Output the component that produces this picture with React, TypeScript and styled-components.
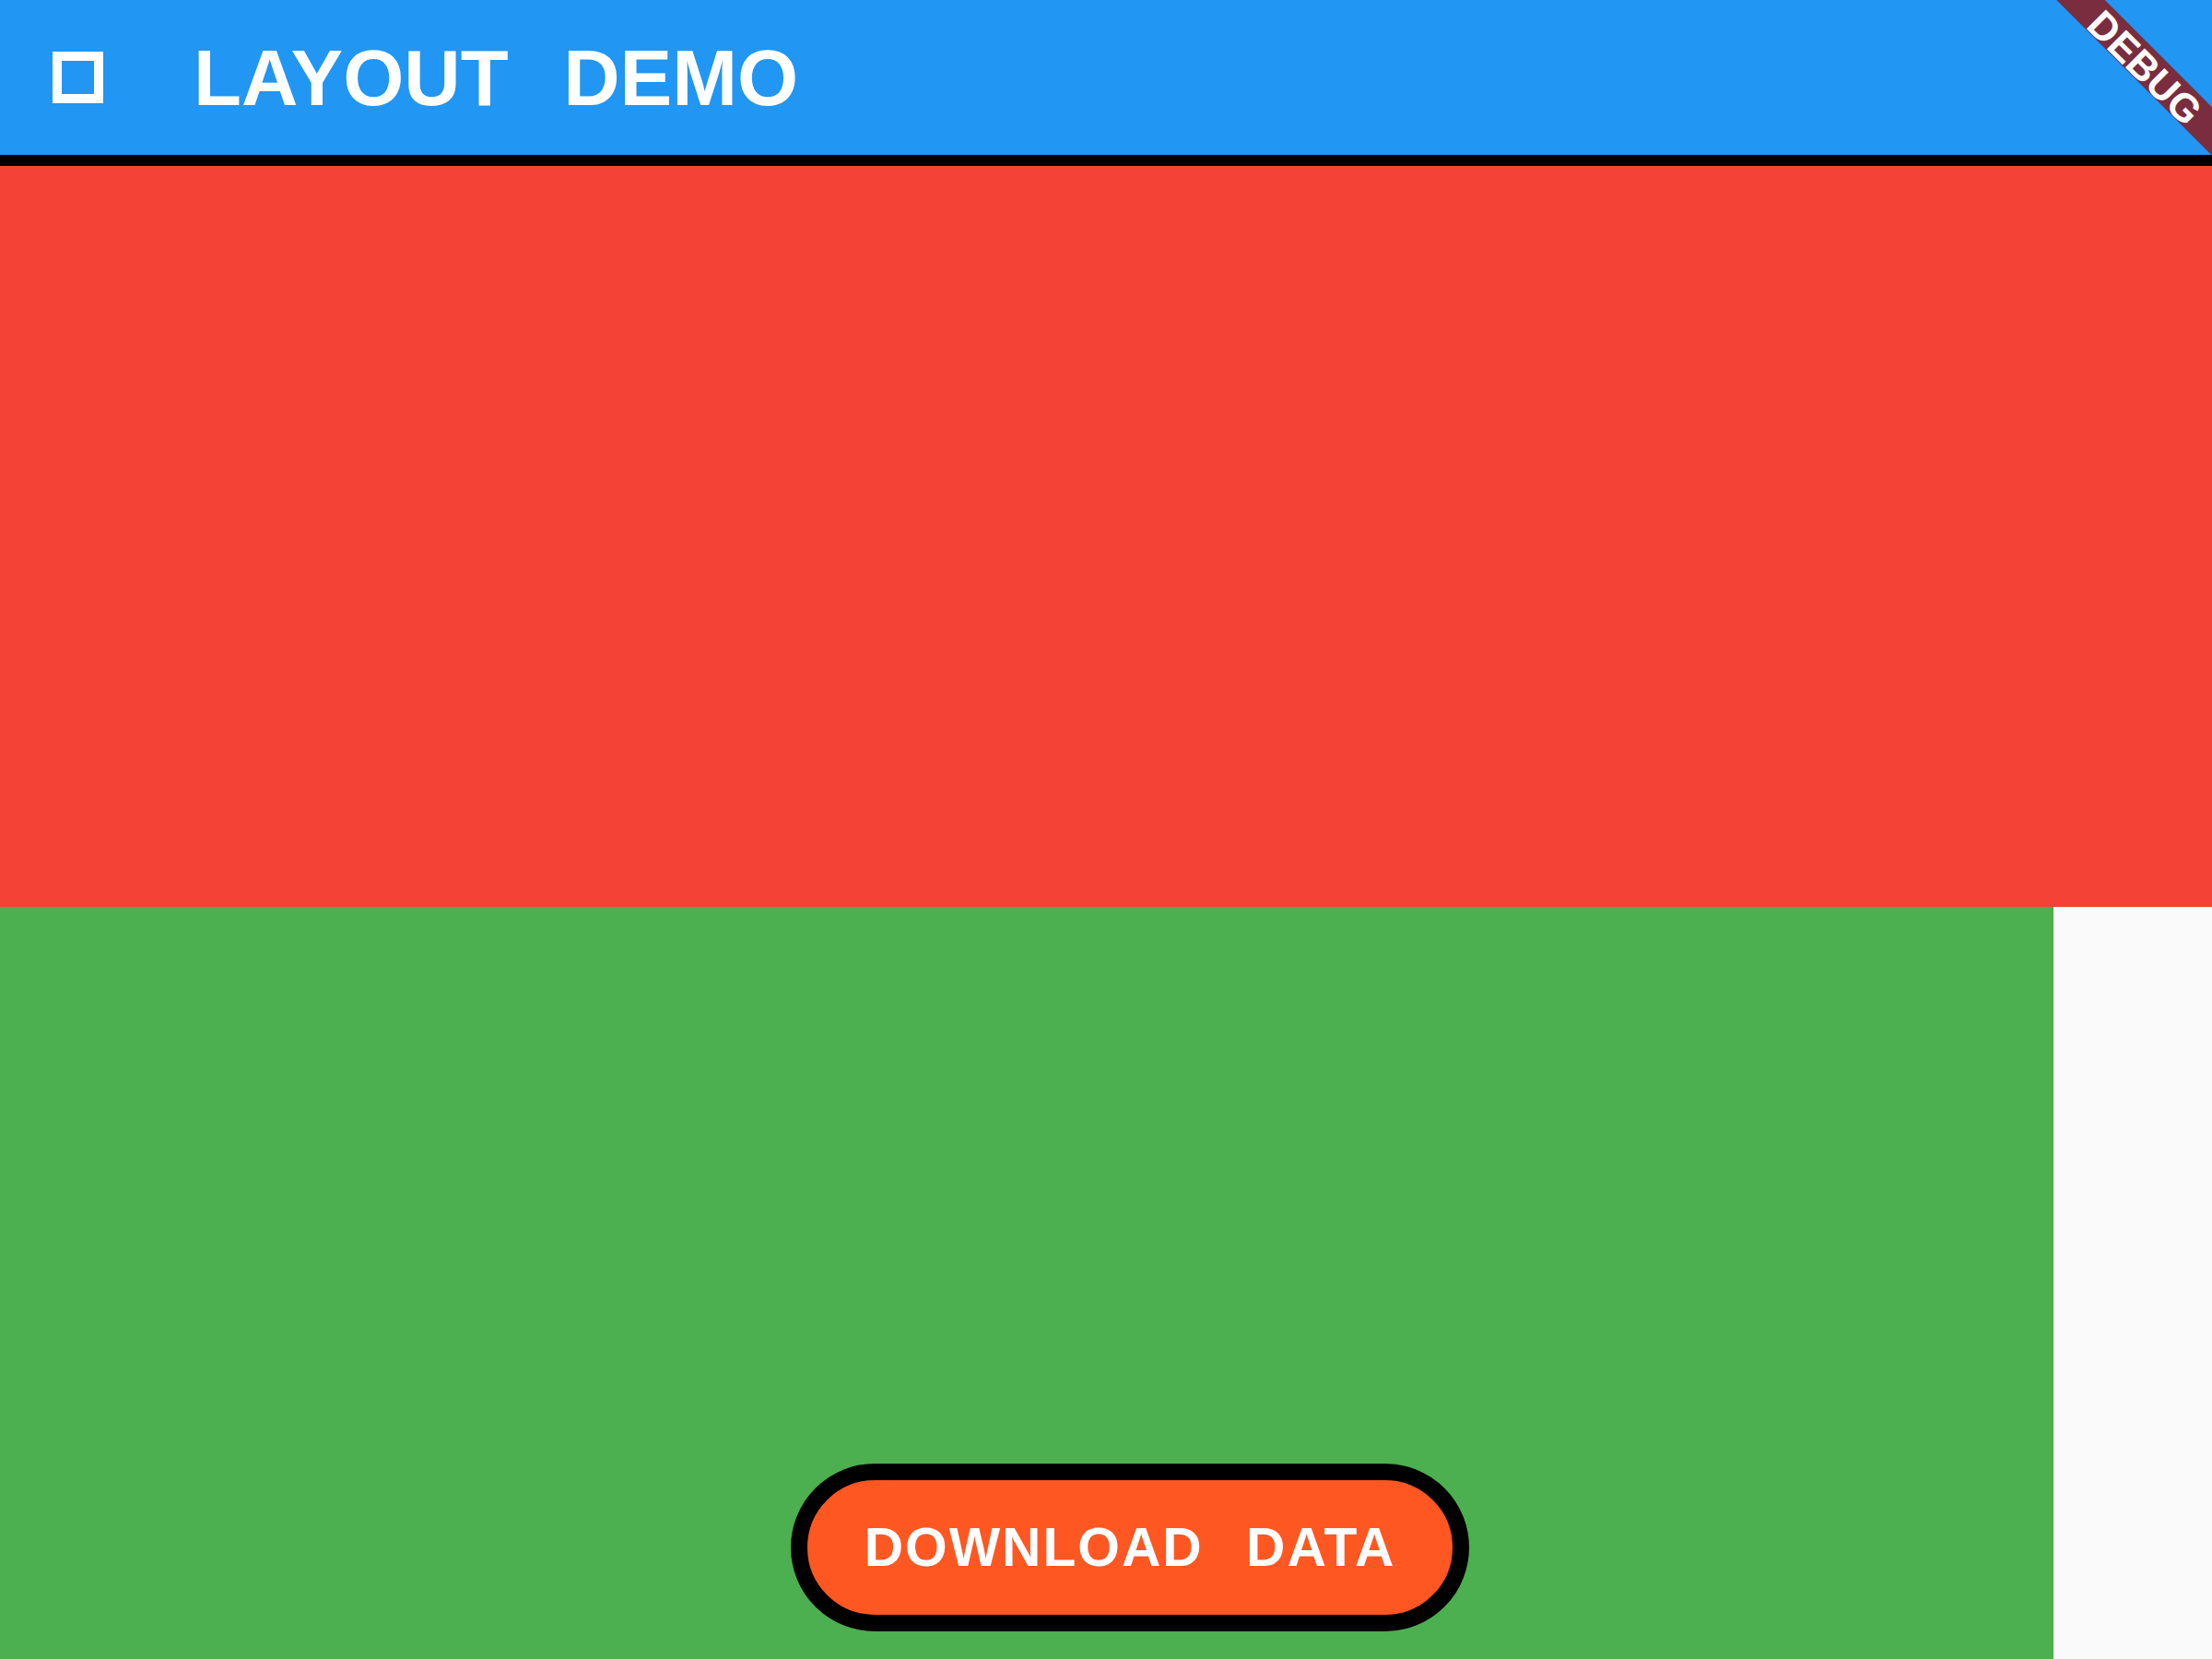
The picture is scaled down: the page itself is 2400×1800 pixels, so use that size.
import React from "react";
import styled, { createGlobalStyle } from "styled-components";

const GlobalStyle = createGlobalStyle`
  html, body {
    margin: 0;
    padding: 0;
    background: #fafafa;
    overflow: hidden;
  }
  * { box-sizing: border-box; }
`;

const Screen = styled.div`
  position: relative;
  width: 2400px;
  height: 1800px;
  overflow: hidden;
  display: flex;
  flex-direction: column;
  background: #fafafa;
  font-family: "Liberation Sans", Arial, sans-serif;
`;

const AppBar = styled.header`
  flex: 0 0 auto;
  height: 180px;
  background: #2196f3;
  border-bottom: 12px solid #000000;
  display: flex;
  align-items: center;
  padding-left: 57px;
  gap: 98px;
`;

const LeadingIcon = styled.span`
  display: block;
  width: 55px;
  height: 56px;
  border: 10px solid #ffffff;
`;

const Title = styled.h1`
  margin: 0;
  color: #ffffff;
  font-size: 85px;
  font-weight: 700;
  line-height: 1;
  word-spacing: 36px;
  white-space: nowrap;
`;

const TopPanel = styled.section`
  flex: 0 0 804px;
  background: #f44336;
`;

const BottomRow = styled.div`
  flex: 1 1 auto;
  display: flex;
`;

const GreenPanel = styled.section`
  position: relative;
  width: 2228px;
  height: 100%;
  background: #4caf50;
`;

const Fab = styled.button`
  position: absolute;
  left: 858px;
  bottom: 30px;
  width: 736px;
  height: 182px;
  border: 18px solid #000000;
  border-radius: 91px;
  background: #ff5722;
  padding: 0 55px;
  display: flex;
  align-items: center;
  justify-content: center;
  cursor: pointer;
`;

const FabLabel = styled.span`
  color: #ffffff;
  font-family: "Liberation Sans", Arial, sans-serif;
  font-size: 58.7px;
  font-weight: 700;
  line-height: 1;
  letter-spacing: 2px;
  word-spacing: 28px;
  white-space: nowrap;
`;

const DebugBanner = styled.div`
  position: absolute;
  top: 53px;
  right: -109px;
  width: 360px;
  height: 37px;
  background: #792d3f;
  transform: rotate(45deg);
  display: flex;
  justify-content: center;
  z-index: 10;
  pointer-events: none;
`;

const BannerText = styled.span`
  color: #ffffff;
  font-family: "Liberation Sans", Arial, sans-serif;
  font-size: 42.7px;
  font-weight: 700;
  line-height: 42px;
  height: 37px;
`;

export default function App() {
  return (
    <>
      <GlobalStyle />
      <Screen>
        <AppBar>
          <LeadingIcon aria-hidden="true" />
          <Title>LAYOUT DEMO</Title>
        </AppBar>
        <TopPanel />
        <BottomRow>
          <GreenPanel>
            <Fab type="button">
              <FabLabel>DOWNLOAD DATA</FabLabel>
            </Fab>
          </GreenPanel>
        </BottomRow>
        <DebugBanner>
          <BannerText>DEBUG</BannerText>
        </DebugBanner>
      </Screen>
    </>
  );
}
